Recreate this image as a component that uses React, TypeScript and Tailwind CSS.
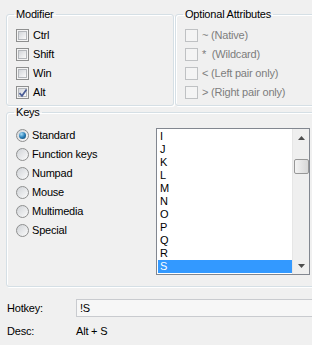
import React from "react";

const font = { fontFamily: '"Liberation Sans", Arial, sans-serif' };

function Check({ checked = false, disabled = false }: { checked?: boolean; disabled?: boolean }) {
  if (disabled) {
    return (
      <div className="w-[13px] h-[13px] border border-[#bfc1c3] bg-[#f4f4f4] shrink-0" />
    );
  }
  return (
    <div className="relative w-[13px] h-[13px] border border-[#8e8f8f] bg-[#f4f4f4] p-[1px] shrink-0">
      <div className="w-full h-full border border-[#b3b6ba] bg-gradient-to-br from-[#d3d6da] to-[#fafafa]" />
      {checked && (
        <svg className="absolute left-[1px] top-[1px]" width="10" height="10" viewBox="0 0 10 10">
          <path d="M1.5 5.2 L4 7.8 L8.5 1.5" fill="none" stroke="#4a5c95" strokeWidth="1.7" />
        </svg>
      )}
    </div>
  );
}

function Radio({ checked = false }: { checked?: boolean }) {
  return (
    <div className="w-[13px] h-[13px] rounded-full border border-[#8e8f8f] bg-gradient-to-br from-[#d0d3d7] to-[#fbfbfb] flex items-center justify-center shrink-0">
      {checked && (
        <div className="w-[7px] h-[7px] rounded-full bg-[radial-gradient(circle_at_35%_30%,#a8ddf7,#2a7fb8_50%,#0c3c60)]" />
      )}
    </div>
  );
}

function CheckRow({ label, checked, disabled }: { label: string; checked?: boolean; disabled?: boolean }) {
  return (
    <div className="flex items-center h-[13px] gap-[4px]">
      <Check checked={checked} disabled={disabled} />
      <span className={`whitespace-pre ${disabled ? "text-[#7d7d7d]" : "text-black"}`}>{label}</span>
    </div>
  );
}

function RadioRow({ label, checked }: { label: string; checked?: boolean }) {
  return (
    <div className="flex items-center h-[13px] gap-[3px]">
      <Radio checked={checked} />
      <span>{label}</span>
    </div>
  );
}

const groupCls =
  "border border-[#d5dfe5] rounded-[3px] shadow-[inset_1px_1px_0_#ffffff,1px_1px_0_#ffffff] m-0 p-0 min-w-0";
const legendCls = "ml-[7px] px-[2px] leading-[13px] text-black";

export default function App() {
  const keys = ["I", "J", "K", "L", "M", "N", "O", "P", "Q", "R", "S"];
  return (
    <div
      className="w-[312px] h-[345px] bg-[#f0f0f0] overflow-hidden text-[11px] leading-[13px] tracking-[-0.2px] text-black"
      style={font}
    >
      <div className="w-[460px] pl-[6px]">
        <div className="flex gap-[1px] pt-[8px]">
          <fieldset className={`${groupCls} w-[168px] h-[98px] shrink-0`}>
            <legend className={legendCls}>Modifier</legend>
            <div className="flex flex-col gap-[6px] pl-[9px] mt-[8px]">
              <CheckRow label="Ctrl" />
              <CheckRow label="Shift" />
              <CheckRow label="Win" />
              <CheckRow label="Alt" checked />
            </div>
          </fieldset>
          <fieldset className={`${groupCls} w-[170px] h-[98px] shrink-0`}>
            <legend className={legendCls}>Optional Attributes</legend>
            <div className="flex flex-col gap-[6px] pl-[9px] mt-[8px]">
              <CheckRow label="~ (Native)" disabled />
              <CheckRow label="*  (Wildcard)" disabled />
              <CheckRow label="< (Left pair only)" disabled />
              <CheckRow label="> (Right pair only)" disabled />
            </div>
          </fieldset>
        </div>

        <fieldset className={`${groupCls} w-[340px] h-[181px]`}>
          <legend className={legendCls}>Keys</legend>
          <div className="flex items-start pl-[9px]">
            <div className="w-[140px] shrink-0 mt-[10px] flex flex-col gap-[6px]">
              <RadioRow label="Standard" checked />
              <RadioRow label="Function keys" />
              <RadioRow label="Numpad" />
              <RadioRow label="Mouse" />
              <RadioRow label="Multimedia" />
              <RadioRow label="Special" />
            </div>
            <div className="mt-[9px] w-[154px] h-[147px] shrink-0 border border-[#828790] bg-white flex">
              <div className="flex-1 pt-[1px] pl-[1px]">
                {keys.map((k) => (
                  <div
                    key={k}
                    className={`h-[13px] leading-[13px] pl-[2px] ${
                      k === "S" ? "bg-[#3399ff] text-white" : "text-black"
                    }`}
                  >
                    {k}
                  </div>
                ))}
              </div>
              <div className="w-[17px] bg-[#efefef] border-l border-[#e6e6e6] flex flex-col items-center">
                <div className="h-[17px] w-full flex items-center justify-center">
                  <svg width="7" height="4" viewBox="0 0 7 4">
                    <path d="M0 4 L3.5 0 L7 4 Z" fill="#4d4d4d" />
                  </svg>
                </div>
                <div className="mt-[13px] w-[15px] h-[15px] rounded-[2px] border border-[#979797] bg-gradient-to-r from-[#f3f3f3] to-[#d8d8d8]" />
                <div className="flex-1" />
                <div className="h-[17px] w-full flex items-center justify-center">
                  <svg width="7" height="4" viewBox="0 0 7 4">
                    <path d="M0 0 L7 0 L3.5 4 Z" fill="#4d4d4d" />
                  </svg>
                </div>
              </div>
            </div>
          </div>
        </fieldset>
      </div>

      <div className="mt-[12px] flex items-center h-[18px] w-[400px]">
        <div className="w-[76px] shrink-0 pl-[7px]">Hotkey:</div>
        <div className="w-[260px] shrink-0 h-[18px] border border-[#c9cbcf] bg-[#f7f7f7] pl-[3px] flex items-center">
          !S
        </div>
      </div>
      <div className="mt-[8px] flex items-center h-[13px]">
        <div className="w-[76px] shrink-0 pl-[7px]">Desc:</div>
        <div>Alt + S</div>
      </div>
    </div>
  );
}
